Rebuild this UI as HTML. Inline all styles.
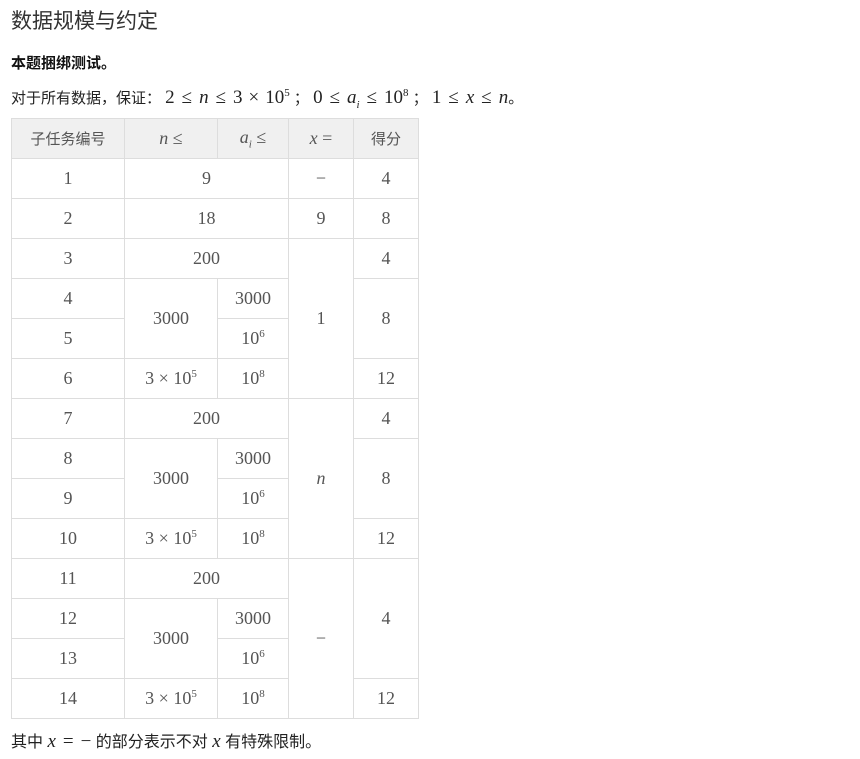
<!DOCTYPE html>
<html><head><meta charset="utf-8"><style>
body{margin:0;background:#fff;font-family:"Liberation Sans","Noto Sans CJK SC",sans-serif;color:#333;}
.h{position:absolute;left:11px;top:5px;font-size:21px;color:#333;}
.b{position:absolute;left:11px;top:52px;font-size:15px;font-weight:bold;color:#111;}
.p{position:absolute;left:11px;top:87px;font-size:15px;color:#222;white-space:nowrap;}
.m{font-family:"Liberation Serif",serif;font-size:19px;}
.o{display:inline-block;margin:0 7px;}
.s{display:inline-block;margin:0 6px;}
i{font-family:"Liberation Serif",serif;}
table{position:absolute;left:11px;top:118px;border-collapse:collapse;table-layout:fixed;}
td,th{border:1px solid #ddd;height:39px;padding:0;text-align:center;color:#555;font-family:"Liberation Serif","Noto Sans CJK SC",serif;font-size:18px;font-weight:normal;}
th{background:#f0f0f0;}
th.c{font-family:"Liberation Sans","Noto Sans CJK SC",sans-serif;font-size:15px;}
sup{font-size:11px;vertical-align:7px;}
.f{position:absolute;left:11px;top:728px;font-size:16px;color:#222;white-space:nowrap;}
</style></head><body>
<div class="h">数据规模与约定</div>
<div class="b">本题捆绑测试。</div>
<div class="p">对于所有数据，保证： <span class="m">2<span class="o">≤</span><i>n</i><span class="o">≤</span>3<span class="s">×</span>10<sup>5</sup></span> ； <span class="m">0<span class="o">≤</span><i>a<sub style="font-size:11px">i</sub></i><span class="o">≤</span>10<sup>8</sup></span> ； <span class="m">1<span class="o">≤</span><i>x</i><span class="o">≤</span><i>n</i></span>。</div>
<table>
<colgroup><col style="width:113px"><col style="width:93px"><col style="width:71px"><col style="width:65px"><col style="width:65px"></colgroup>
<tr><th class="c">子任务编号</th><th><i>n</i> ≤</th><th><i>a<sub style="font-size:11px">i</sub></i> ≤</th><th><i>x</i> =</th><th class="c">得分</th></tr>
<tr><td>1</td><td colspan="2">9</td><td>−</td><td>4</td></tr>
<tr><td>2</td><td colspan="2">18</td><td>9</td><td>8</td></tr>
<tr><td>3</td><td colspan="2">200</td><td rowspan="4">1</td><td>4</td></tr>
<tr><td>4</td><td rowspan="2">3000</td><td>3000</td><td rowspan="2">8</td></tr>
<tr><td>5</td><td>10<sup>6</sup></td></tr>
<tr><td>6</td><td>3 × 10<sup>5</sup></td><td>10<sup>8</sup></td><td>12</td></tr>
<tr><td>7</td><td colspan="2">200</td><td rowspan="4"><i>n</i></td><td>4</td></tr>
<tr><td>8</td><td rowspan="2">3000</td><td>3000</td><td rowspan="2">8</td></tr>
<tr><td>9</td><td>10<sup>6</sup></td></tr>
<tr><td>10</td><td>3 × 10<sup>5</sup></td><td>10<sup>8</sup></td><td>12</td></tr>
<tr><td>11</td><td colspan="2">200</td><td rowspan="4">−</td><td rowspan="3">4</td></tr>
<tr><td>12</td><td rowspan="2">3000</td><td>3000</td></tr>
<tr><td>13</td><td>10<sup>6</sup></td></tr>
<tr><td>14</td><td>3 × 10<sup>5</sup></td><td>10<sup>8</sup></td><td>12</td></tr>
</table>
<div class="f">其中 <span class="m"><i>x</i><span class="o">=</span>−</span> 的部分表示不对 <span class="m"><i>x</i></span> 有特殊限制。</div>
</body></html>
